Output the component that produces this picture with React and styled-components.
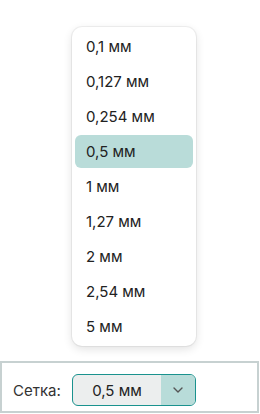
import React, { useState } from 'react';
import styled, { createGlobalStyle } from 'styled-components';

const GlobalStyle = createGlobalStyle`
  html, body {
    margin: 0;
    padding: 0;
    background: #ffffff;
    font-family: Inter, "Noto Sans", sans-serif;
    color: #222;
  }
`;

const Page = styled.div`
  height: 414px;
  display: flex;
  flex-direction: column;
  justify-content: flex-end;
  padding-bottom: 1px;
  box-sizing: border-box;
`;

const Panel = styled.div`
  display: flex;
  align-items: center;
  width: 259px;
  box-sizing: border-box;
  border: 2px solid #c7d1d1;
  padding: 11px 12px 5px 11px;
`;

const Label = styled.span`
  width: 59px;
  font-size: 15px;
  color: #333;
`;

const SelectWrap = styled.div`
  position: relative;
`;

const Select = styled.button`
  display: flex;
  align-items: stretch;
  width: 124px;
  height: 32px;
  padding: 0;
  border: 1px solid #1a928e;
  border-radius: 6px;
  background: #eceeee;
  overflow: hidden;
  font-family: inherit;
  cursor: pointer;
`;

const Value = styled.span`
  flex: 1;
  display: flex;
  align-items: center;
  justify-content: center;
  font-size: 15px;
  color: #222;
`;

const Chevron = styled.span`
  width: 34px;
  display: flex;
  align-items: center;
  justify-content: center;
  background: #b8dcd9;
  color: #555;
`;

const Menu = styled.ul`
  position: absolute;
  left: 0;
  bottom: calc(100% + 28px);
  width: 124px;
  box-sizing: border-box;
  margin: 0;
  padding: 3px;
  list-style: none;
  display: flex;
  flex-direction: column;
  gap: 2px;
  background: #fff;
  border-radius: 10px;
  box-shadow: 0 0 0 1px rgba(0, 0, 0, 0.05), 0 3px 10px rgba(0, 0, 0, 0.12);
`;

const Item = styled.li`
  height: 33px;
  display: flex;
  align-items: center;
  padding-left: 11px;
  border-radius: 6px;
  font-size: 15px;
  color: #222;
  background: ${({ active }) => (active ? '#b9dcd9' : 'transparent')};
  cursor: pointer;
`;

const options = ['0,1 мм', '0,127 мм', '0,254 мм', '0,5 мм', '1 мм', '1,27 мм', '2 мм', '2,54 мм', '5 мм'];

export default function App() {
  const [value, setValue] = useState('0,5 мм');
  const [open, setOpen] = useState(true);

  return (
    <>
      <GlobalStyle />
      <Page>
        <Panel>
          <Label>Сетка:</Label>
          <SelectWrap>
            {open && (
              <Menu>
                {options.map((o) => (
                  <Item key={o} active={o === value} onClick={() => setValue(o)}>
                    {o}
                  </Item>
                ))}
              </Menu>
            )}
            <Select onClick={() => setOpen(!open)}>
              <Value>{value}</Value>
              <Chevron>
                <svg width="10" height="6" viewBox="0 0 10 6" fill="none">
                  <path d="M1 1l4 4 4-4" stroke="currentColor" strokeWidth="1.4" strokeLinecap="round" strokeLinejoin="round" />
                </svg>
              </Chevron>
            </Select>
          </SelectWrap>
        </Panel>
      </Page>
    </>
  );
}
